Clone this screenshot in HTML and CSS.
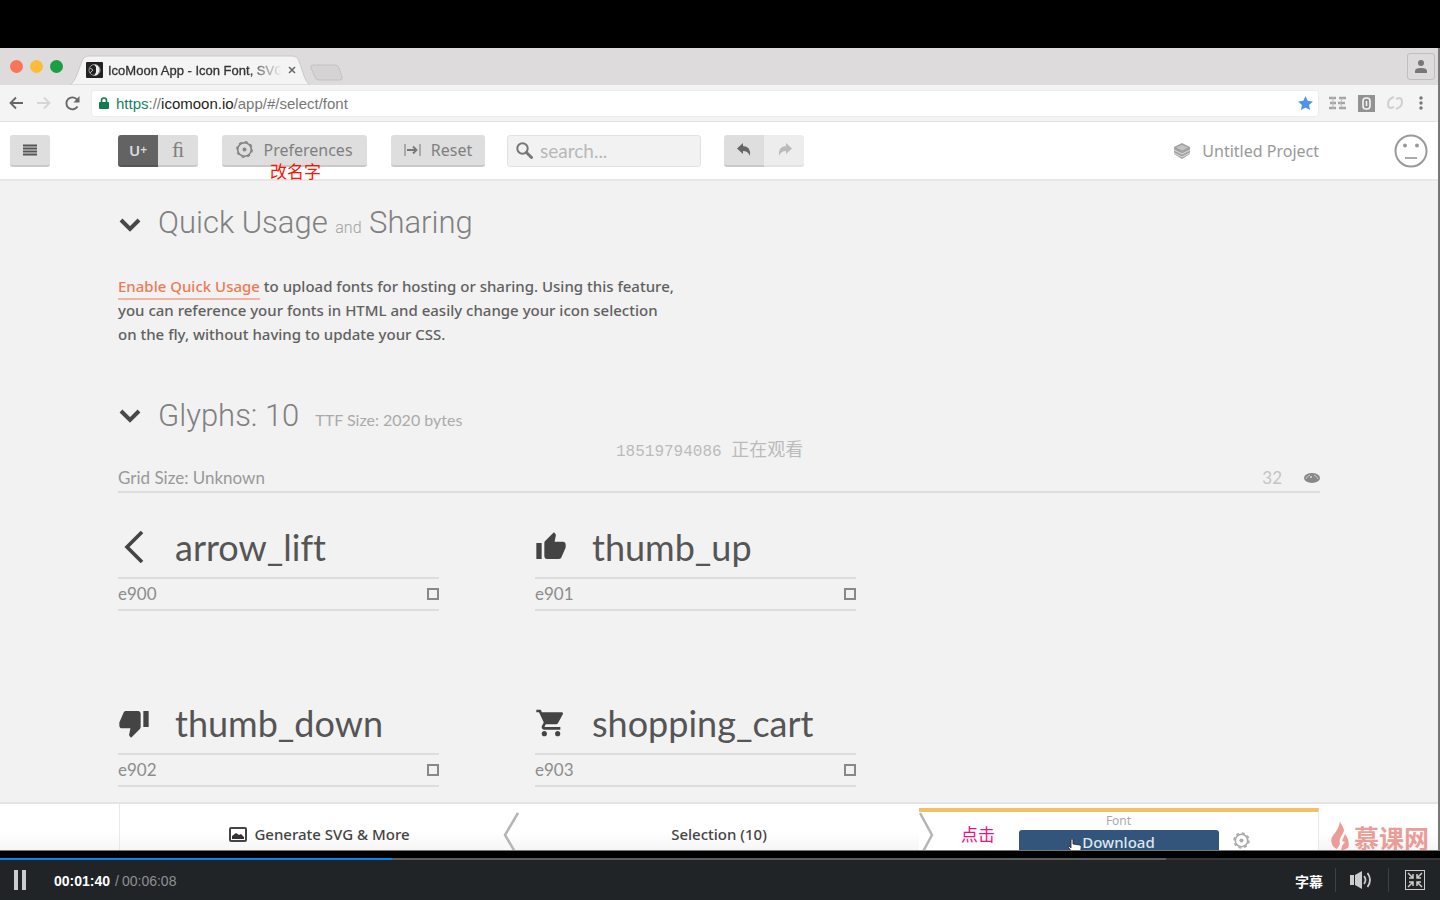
FILE: index.html
```
<!DOCTYPE html>
<html lang="zh-CN">
<head>
<meta charset="utf-8">
<title>IcoMoon App - Icon Font, SVG</title>
<link rel="stylesheet" href="styles.css">
</head>
<body>
<main class="video">
  <header class="tabs">
    <span class="dot red"></span><span class="dot amber"></span><span class="dot green"></span>
    <div class="tab">
      <svg class="tab-shape" viewBox="0 0 240 30" preserveAspectRatio="none"><path d="M0 30C5 27 8 17 12 6Q14 1 19 1H222Q227 1 229 6C233 17 235 27 240 30Z" fill="#f4f4f4" stroke="#cbc8c9"/></svg>
      <div class="tab-body">
        <svg width="17" height="16" viewBox="0 0 17 16"><rect width="17" height="16" rx="1" fill="#222"/><circle cx="8.500" cy="8" r="5.500" fill="none" stroke="#999"/><path d="M8 2.500a5.500 5.500 0 0 1 0 11l2-3V5Z" fill="#eee"/><path d="M4 6l3 2-3 3" fill="none" stroke="#bbb"/></svg>
        <span class="tab-title">IcoMoon App - Icon Font, SVG</span>
        <button class="plain" aria-label="Close tab"><svg width="8" height="8" viewBox="0 0 8 8"><path d="M1 1l6 6M7 1L1 7" stroke="#666" stroke-width="1.500"/></svg></button>
      </div>
    </div>
    <svg class="new-tab" width="34" height="17" viewBox="0 0 34 17"><path d="M3 1h22q3 0 4 3l3 9q1 3-2 3H9q-3 0-4-3L1 4Q0 1 3 1Z" fill="#d6d3d4" stroke="#c4c1c2"/></svg>
    <button class="profile" aria-label="Profile"><svg width="12" height="13" viewBox="0 0 12 13"><circle cx="6" cy="3" r="3" fill="#777"/><path d="M0 13v-2q0-3 6-3t6 3v2Z" fill="#777"/></svg></button>
  </header>

  <nav class="address">
    <button class="plain" aria-label="Back"><svg width="14" height="14" viewBox="0 0 14 14"><path d="M14 7H2M7 1.500L1.500 7 7 12.500" fill="none" stroke="#666" stroke-width="1.800"/></svg></button>
    <button class="plain" aria-label="Forward"><svg width="14" height="14" viewBox="0 0 14 14"><path d="M0 7h12M7 1.500L12.500 7 7 12.500" fill="none" stroke="#d5d5d5" stroke-width="1.800"/></svg></button>
    <button class="plain" aria-label="Reload"><svg width="15" height="15" viewBox="0 0 15 15"><path d="M12.500 10.500A6 6 0 1 1 12 3.500" fill="none" stroke="#666" stroke-width="1.900"/><path d="M14.500 0v6.500H8.500Z" fill="#666"/></svg></button>
    <div class="url-box">
      <svg width="10" height="13" viewBox="0 0 10 13"><path d="M2.500 6V3.500a2.500 2.500 0 0 1 5 0V6" fill="none" stroke="#137a50" stroke-width="1.600"/><rect y="5" width="10" height="7" rx="1" fill="#137a50"/></svg>
      <span class="url"><span class="secure">https</span>://<span class="host">icomoon.io</span>/app/#/select/font</span>
      <svg class="push" width="15" height="14" viewBox="0 0 20 19"><path d="M10 0l3 6.500 7 .8-5.200 4.800L16.200 19 10 15.500 3.800 19l1.400-6.900L0 7.300l7-.8Z" fill="#4b94e6"/></svg>
    </div>
    <div class="extensions">
      <svg width="17" height="14" viewBox="0 0 17 14"><path d="M0 2h7M10 2h7M1 7h6M9 7h7M0 12h7M10 12h7" stroke="#a4a4a4" stroke-width="2.400"/><path d="M4 1v12M11 7l3-5M11 7l3 5" stroke="#bbb"/></svg>
      <svg width="17" height="17" viewBox="0 0 17 17"><rect width="17" height="17" fill="#929292"/><rect x="5" y="3" width="7" height="11" rx="3" fill="#929292" stroke="#f4f4f4" stroke-width="1.600"/><path d="M8.500 6v5" stroke="#f4f4f4" stroke-width="1.500"/></svg>
      <svg width="16" height="14" viewBox="0 0 16 14"><path d="M7 1Q1 3 1 8q0 4 3 4l3-1M9 13q6-2 6-7 0-4-3-4l-3 1" fill="none" stroke="#d0d0d0" stroke-width="2"/></svg>
      <svg width="4" height="14" viewBox="0 0 4 14"><g fill="#777"><circle cx="2" cy="2" r="1.700"/><circle cx="2" cy="7" r="1.700"/><circle cx="2" cy="12" r="1.700"/></g></svg>
    </div>
  </nav>

  <section class="toolbar">
    <button class="btn square" aria-label="Menu"><svg width="16" height="14" viewBox="0 0 16 14"><path d="M1 2.500h14M1 5.500h14M1 8.500h14M1 11.500h14" stroke="#555" stroke-width="2"/></svg></button>
    <div class="pair modes">
      <button class="btn dark">U<small>+</small></button>
      <button class="btn fi">ﬁ</button>
    </div>
    <div class="noted">
      <button class="btn prefs"><svg width="17" height="17" viewBox="0 0 17 17"><circle cx="8.500" cy="8.500" r="6.800" fill="none" stroke="#808080" stroke-width="1.600"/><circle cx="8.500" cy="8.500" r="7.800" fill="none" stroke="#808080" stroke-width="1.200" stroke-dasharray="3 3.130"/><circle cx="8.500" cy="8.500" r="2" fill="#888"/></svg>Preferences</button>
      <span class="note">改名字</span>
    </div>
    <button class="btn reset"><svg width="17" height="12" viewBox="0 0 17 12"><path d="M1 0v12M16 0v12" stroke="#999" stroke-width="1.500"/><path d="M3 6h9M9 2.500L12.500 6 9 9.500" fill="none" stroke="#777" stroke-width="1.800"/></svg>Reset</button>
    <label class="search">
      <svg width="17" height="17" viewBox="0 0 17 17"><circle cx="6.500" cy="6.500" r="5.200" fill="none" stroke="#777" stroke-width="2"/><path d="M10.500 10.500l5 5" stroke="#777" stroke-width="3" stroke-linecap="round"/></svg>
      <input type="text" placeholder="search..." aria-label="Search">
    </label>
    <div class="pair history">
      <button class="btn square" aria-label="Undo"><svg width="15" height="13" viewBox="0 0 15 13"><path d="M6 0v3q8 0 7 10-2-5-7-5v3L0 5.500Z" fill="#666"/></svg></button>
      <button class="btn square off" aria-label="Redo"><svg width="15" height="13" viewBox="0 0 15 13"><path d="M9 0v3Q1 3 2 13q2-5 7-5v3l6-5.500Z" fill="#bbb"/></svg></button>
    </div>
    <div class="project">
      <svg width="16" height="16" viewBox="0 0 16 16"><path d="M8 0l8 4v7l-8 5-8-5V4Z" fill="#a2a2a2"/><path d="M2 4.500L8 2l6 2.500L8 7.500Z" fill="#c4c4c4"/><path d="M0 7l8 4 8-4M0 10l8 4 8-4" fill="none" stroke="#ddd"/></svg>
      <span>Untitled Project</span>
    </div>
    <button class="plain face" aria-label="Account"><svg width="34" height="34" viewBox="0 0 34 34"><circle cx="17" cy="17" r="15.500" fill="none" stroke="#999" stroke-width="2"/><circle cx="11" cy="11.500" r="2" fill="#999"/><circle cx="23" cy="11.500" r="2" fill="#999"/><path d="M11 24h12" stroke="#aaa" stroke-width="2"/></svg></button>
  </section>

  <section class="content">
    <h2 class="title"><svg width="24" height="16" viewBox="0 0 24 16"><path d="M3 3l9 9 9-9" fill="none" stroke="#484848" stroke-width="4"/></svg><span>Quick Usage <small>and</small> Sharing</span></h2>
    <p class="intro"><a href="#quick">Enable Quick Usage</a> to upload fonts for hosting or sharing. Using this feature,<br>you can reference your fonts in HTML and easily change your icon selection<br>on the fly, without having to update your CSS.</p>
    <h2 class="title"><svg width="24" height="16" viewBox="0 0 24 16"><path d="M3 3l9 9 9-9" fill="none" stroke="#484848" stroke-width="4"/></svg><span>Glyphs: 10</span><span class="ttf">TTF Size: 2020 bytes</span></h2>
    <div class="grid-size"><span>Grid Size: Unknown</span><span class="count">32</span>
      <svg width="16" height="12" viewBox="0 0 16 12"><ellipse cx="8" cy="6" rx="8" ry="5" fill="#888"/><path d="M2 7q1-3 4-4M10 3q3 1 4 4" fill="none" stroke="#ccc"/><circle cx="7" cy="5" r="1" fill="#ddd"/></svg>
    </div>
    <div class="glyphs">
      <article class="glyph"><h3><svg viewBox="0 0 32 32"><path d="M24 1L9 16l15 15" fill="none" stroke="#444" stroke-width="3.600"/></svg>arrow_lift</h3><label>e900<input type="checkbox"></label></article>
      <article class="glyph"><h3><svg viewBox="0 0 24 24"><path d="M1 21h4V9H1v12zm22-11c0-1.100-.9-2-2-2h-6.310l.95-4.570.03-.32c0-.41-.17-.79-.44-1.060L14.170 1 7.590 7.590C7.220 7.950 7 8.450 7 9v10c0 1.100.9 2 2 2h9c.83 0 1.540-.5 1.840-1.220l3.020-7.050c.09-.23.140-.47.140-.73v-2z" fill="#444"/></svg>thumb_up</h3><label>e901<input type="checkbox"></label></article>
      <article class="glyph"><h3><svg viewBox="0 0 24 24"><path d="M15 3H6c-.83 0-1.540.5-1.840 1.220l-3.020 7.050c-.09.23-.14.47-.14.730v2c0 1.100.9 2 2 2h6.310l-.95 4.570-.03.32c0 .41.17.79.44 1.060L9.830 23l6.590-6.590c.36-.36.58-.86.58-1.410V5c0-1.100-.9-2-2-2zm4 0v12h4V3h-4z" fill="#444"/></svg>thumb_down</h3><label>e902<input type="checkbox"></label></article>
      <article class="glyph"><h3><svg viewBox="0 0 24 24"><path d="M7 18c-1.100 0-1.990.9-1.990 2S5.900 22 7 22s2-.9 2-2-.9-2-2-2zM1 2v2h2l3.600 7.590-1.350 2.450c-.16.280-.25.610-.25.960 0 1.100.9 2 2 2h12v-2H7.420c-.14 0-.25-.11-.25-.25l.03-.12.900-1.630h7.450c.75 0 1.410-.41 1.750-1.030l3.580-6.490c.08-.14.120-.31.120-.48 0-.55-.45-1-1-1H5.210l-.94-2H1zm16 16c-1.100 0-1.990.9-1.990 2s.89 2 1.990 2 2-.9 2-2-.9-2-2-2z" fill="#444"/></svg>shopping_cart</h3><label>e903<input type="checkbox"></label></article>
    </div>
    <p class="watermark"><span>18519794086 </span>正在观看</p>
  </section>

  <footer class="steps">
    <div class="step first"><svg width="18" height="15" viewBox="0 0 18 15"><rect x="1" y="1" width="16" height="13" rx="1" fill="none" stroke="#444" stroke-width="2"/><path d="M3 12V9l4-3 3 2 2-1 3 3v2Z" fill="#333"/></svg>Generate SVG &amp; More</div>
    <div class="step"><svg class="edge left" width="17" height="46" viewBox="0 0 17 46"><path d="M16 1L3 23l13 22" fill="none" stroke="#b5b5b5" stroke-width="2.500"/></svg>Selection (10)</div>
    <div class="step active">
      <svg class="edge right" width="17" height="46" viewBox="0 0 17 46"><path d="M1 1l12 22L1 45" fill="none" stroke="#b5b5b5" stroke-width="2.500"/></svg>
      <span class="note pink">点击</span>
      <span class="font-label">Font</span>
      <button class="download"><svg width="14" height="14" viewBox="0 0 14 14"><path d="M3 0h2v5l7 1q2 1 1 4l-1 4H5L0 8l1-1 2 2Z" fill="#fff" stroke="#222" stroke-width=".8"/></svg>Download</button>
      <svg class="cog" width="17" height="17" viewBox="0 0 17 17"><circle cx="8.500" cy="8.500" r="6.200" fill="none" stroke="#aaa" stroke-width="1.600"/><circle cx="8.500" cy="8.500" r="7.500" fill="none" stroke="#aaa" stroke-width="1.500" stroke-dasharray="3 2.890"/><circle cx="8.500" cy="8.500" r="2" fill="#aaa"/></svg>
    </div>
    <div class="brand"><svg width="18" height="30" viewBox="0 0 18 30"><path d="M9 0c1 4 4 6 4 10l-2 4c-2 3-3 5-2 9l-3 5C1 26-1 20 1 16c2-3 7-8 8-16ZM14 13c3 4 5 9 3 14l-7 3 1-5 3-4-3-1Z" fill="#ea9d97"/></svg><span>慕课网</span></div>
  </footer>
</main>

<section class="player">
  <input class="seek" type="range" min="0" max="368" value="100" aria-label="Seek">
  <div class="controls">
    <button class="plain pause" aria-label="Pause"><svg width="12" height="20" viewBox="0 0 12 20"><path d="M0 0h4v20H0ZM8 0h4v20H8Z" fill="#ccc"/></svg></button>
    <span class="time"><b>00:01:40</b><span class="total">/</span><span class="length">00:06:08</span></span>
    <button class="plain captions">字幕</button>
    <button class="plain control" aria-label="Volume"><svg width="24" height="18" viewBox="0 0 24 18"><path d="M0 4h4v10H0ZM5 4l7-4v18l-7-4Z" fill="#ccc"/><path d="M14 5q3 4 0 8M17.500 2q5 7 0 14" fill="none" stroke="#ccc" stroke-width="1.800"/></svg></button>
    <button class="plain control" aria-label="Exit full screen"><svg width="20" height="20" viewBox="0 0 20 20"><rect x=".5" y=".5" width="19" height="19" fill="none" stroke="#ccc"/><path d="M3 3l5 5M17 3l-5 5M3 17l5-5M17 17l-5-5M4 8h4V4M12 4v4h4M4 12h4v4M16 12h-4v4" fill="none" stroke="#ccc" stroke-width="1.500"/></svg></button>
  </div>
</section>
</body>
</html>
```
FILE: styles.css
```
* { box-sizing: border-box; }
html, body { height: 100%; }
body {
  margin: 0;
  padding-top: 48px;
  display: flex;
  flex-direction: column;
  background: #000;
  font-family: "Noto Sans", "Noto Sans CJK SC", sans-serif;
  font-size: 16px;
  color: #555;
}
svg { display: block; flex: none; }
button { font: inherit; color: inherit; }
.plain { border: 0; padding: 0; background: none; }

.video {
  flex: 1;
  min-height: 0;
  display: flex;
  flex-direction: column;
  overflow: hidden;
  background: #f2f2f2;
  border-right: 2px solid #777;
  border-bottom: 1px solid #777;
}

/* browser tabs */
.tabs {
  flex: none;
  height: 37px;
  display: flex;
  align-items: center;
  padding: 0 3px 0 10px;
  background: #dedbdc;
}
.dot { width: 13px; height: 13px; margin-right: 7px; border-radius: 50%; }
.red { background: #fb7457; }
.amber { background: #fdbb3a; }
.green { background: #1c9e42; }
.tab { align-self: flex-end; width: 240px; height: 30px; display: grid; }
.tab > * { grid-area: 1 / 1; }
.tab-shape { width: 100%; height: 30px; }
.tab-body { display: flex; align-items: center; padding: 0 14px 0 16px; z-index: 1; }
.tab-title {
  width: 174px;
  margin: 0 6px 0 5px;
  overflow: hidden;
  white-space: nowrap;
  font: 13px "Liberation Sans", sans-serif;
  -webkit-text-stroke: 0.3px;
  color: #333;
  mask-image: linear-gradient(90deg, #000 80%, transparent);
}
.new-tab { margin-top: 12px; }
.profile {
  width: 28px;
  height: 27px;
  margin-left: auto;
  display: grid;
  place-items: center;
  border: 1px solid #c2bfc0;
  border-radius: 3px;
  background: #dedbdc;
}

/* address bar */
.address {
  flex: none;
  height: 37px;
  display: flex;
  align-items: center;
  gap: 14px;
  padding: 0 15px 0 9px;
  background: #f4f4f4;
  border-bottom: 1px solid #e2e2e2;
}
.url-box {
  flex: 1;
  height: 27px;
  display: flex;
  align-items: center;
  gap: 7px;
  margin-left: -3px;
  padding: 0 5px 0 7px;
  background: #fff;
  border: 1px solid #ececec;
  border-radius: 3px;
}
.url { font: 15px "Liberation Sans", sans-serif; color: #777; }
.secure { color: #138364; }
.host { color: #222; }
.push { margin-left: auto; }
.extensions { display: flex; align-items: center; gap: 12px; margin-left: -4px; }
.extensions svg:last-child { margin-left: 4px; }

/* application toolbar */
.toolbar {
  flex: none;
  height: 59px;
  display: flex;
  align-items: center;
  padding: 0 10px;
  background: #fff;
  border-bottom: 2px solid #e8e8e8;
}
.btn {
  height: 32px;
  display: flex;
  align-items: center;
  justify-content: center;
  border: 0;
  border-bottom: 2px solid #c9c9c9;
  border-radius: 3px;
  padding: 0;
  background: #dedede;
  color: #808080;
}
.square { width: 40px; }
.pair { display: flex; }
.pair .btn { width: 40px; }
.pair .btn:first-child { border-radius: 3px 0 0 3px; }
.pair .btn:last-child { border-radius: 0 3px 3px 0; }
.modes { margin: 0 24px 0 68px; }
.pair .dark { background: #636363; border-color: #555; color: #ddd; font-weight: 600; font-size: 15px; }
.dark small { font-size: 12px; }
.fi { font: 22px "Liberation Serif", serif; }
.noted { position: relative; }
.note { position: absolute; font: 17px/20px "Noto Sans CJK SC", sans-serif; color: #f10; white-space: nowrap; }
.noted .note { left: 48px; top: 26px; }
.prefs { width: 145px; gap: 10px; }
.reset { width: 94px; gap: 10px; margin-left: 24px; }
.search {
  width: 194px;
  height: 32px;
  margin: 0 23px 0 22px;
  display: flex;
  align-items: center;
  gap: 7px;
  padding: 0 8px;
  background: #f2f2f2;
  border: 1px solid #e2e2e2;
  border-radius: 3px;
}
.search input {
  width: 100%;
  min-width: 0;
  border: 0;
  padding: 0;
  outline: 0;
  background: none;
  font: 19px/24px Lato, sans-serif;
}
.search input::placeholder { color: #b8b8b8; }
.pair .off { background: #ededed; border-color: #e2e2e2; }
.project { display: flex; align-items: center; gap: 12px; margin-left: auto; color: #999; }
.face { margin-left: 75px; }

/* page content */
.content { position: relative; flex: 1; min-height: 0; overflow: hidden; padding: 20px 118px 0; }
.title {
  margin: 0;
  height: 48px;
  display: flex;
  align-items: center;
  gap: 16px;
  font: 300 31px/48px Roboto, sans-serif;
  color: #808080;
}
.title small { font-size: 16px; color: #a0a0a0; }
.title .ttf { font: 16px/24px Lato, sans-serif; color: #aaa; padding-top: 8px; }
.intro { margin: 25px 0 46px; line-height: 24px; font-size: 15px; font-weight: 500; color: #606060; }
.intro a { color: #ef7a55; text-decoration: none; border-bottom: 2px solid #f3b5a2; padding-bottom: 2px; }
.grid-size {
  display: flex;
  align-items: center;
  height: 29px;
  margin-top: 24px;
  border-bottom: 2px solid #dcdcdc;
  font: 17px/24px Lato, sans-serif;
  color: #999;
}
.count { margin: 0 22px 0 auto; color: #c4c4c4; }
.glyphs { display: grid; grid-template-columns: repeat(2, 321px); gap: 82px 96px; margin-top: 24px; }
.glyph h3 {
  margin: 0;
  height: 60px;
  display: flex;
  align-items: center;
  gap: 25px;
  font: 36px/48px Lato, sans-serif;
  font-variant-ligatures: none;
  color: #555;
}
.glyph h3 svg { width: 32px; height: 32px; }
.glyph label {
  display: flex;
  align-items: center;
  justify-content: space-between;
  height: 34px;
  border: solid #dcdcdc;
  border-width: 2px 0;
  font: 17px/24px Lato, sans-serif;
  color: #8c8c8c;
}
.glyph input { appearance: none; width: 12px; height: 12px; margin: 0; border: 2px solid #888; }
.watermark {
  position: absolute;
  left: 616px;
  top: 255px;
  margin: 0;
  white-space: pre;
  font: 18px/24px "Noto Sans CJK SC", sans-serif;
  color: #bbb;
}
.watermark span { font: 16px "Liberation Mono", monospace; }

/* bottom steps */
.steps {
  flex: none;
  height: 48px;
  display: grid;
  grid-template-columns: 119px repeat(3, 1fr) 119px;
  background: linear-gradient(#fff 60%, #f6f6f6);
  border-top: 2px solid #e4e4e4;
}
.step {
  position: relative;
  display: flex;
  align-items: center;
  justify-content: center;
  gap: 7px;
  padding-top: 12px;
  line-height: 20px;
  padding-bottom: 6px;
  color: #444;
  font-size: 15px;
  font-weight: 500;
}
.first { grid-column: 2; border-left: 1px solid #e8e8e8; }
.edge { position: absolute; top: 8px; }
.left { left: -17px; }
.right { left: 0; }
.active {
  display: grid;
  grid-template-columns: 1fr 200px 1fr;
  grid-template-rows: 16px 30px;
  gap: 0 14px;
  align-items: start;
  align-content: start;
  margin-top: 4px;
  padding: 0;
  border-top: 4px solid #f3c063;
  border-right: 1px solid #e8e8e8;
  background: #fff;
}
.active .edge { top: 0; }
.font-label { grid-column: 2; justify-self: center; padding-top: 1px; font-size: 12px; line-height: 16px; color: #aaa; font-weight: 400; }
.pink { left: 42px; top: 12px; color: #f0127e; }
.download {
  grid-column: 2;
  height: 30px;
  margin-top: 2px;
  display: flex;
  justify-content: center;
  padding: 0 14px 0 0;
  border: 0;
  border-radius: 3px;
  background: #34557b;
  color: #dfe6ee;
  line-height: 24px;
}
.download svg { margin-top: 9px; }
.cog { margin-top: 4px; }
.brand { display: flex; align-items: flex-start; gap: 5px; padding: 17px 0 0 12px; color: #ea9d97; font: 700 25px/32px "Noto Sans CJK SC", sans-serif; white-space: nowrap; }

/* player bar */
.player { flex: none; margin-top: 7px; background: #202427; }
.seek {
  appearance: none;
  display: block;
  width: 100%;
  height: 2px;
  margin: 0;
  background: linear-gradient(90deg, #0b83f0 27.2%, #5b5f62 27.2% 81%, #34383b 81%);
}
.seek::-webkit-slider-thumb { appearance: none; width: 0; height: 0; }
.controls { display: flex; align-items: center; height: 40px; padding: 0 9px 0 14px; }
.pause { margin-right: 28px; }
.time { padding-top: 2px; font: 14px/16px "Liberation Sans", sans-serif; color: #8e9193; }
.time b { color: #fff; }
.total { margin: 0 3px 0 5px; }
.captions { margin-left: auto; padding: 2px 12px 0 0; font: 700 14px/20px "Noto Sans CJK SC", sans-serif; color: #fff; }
.control { height: 24px; display: grid; place-items: center; border-left: 1px solid #3d4144; }
.control:nth-last-child(2) { width: 53px; }
.control:last-child { width: 43px; padding-left: 10px; }
```
